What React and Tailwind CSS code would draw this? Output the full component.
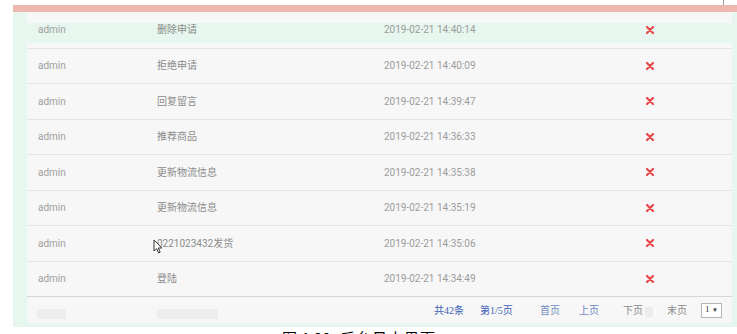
import React from 'react';

const rows = [
  { user: 'admin', action: '删除申请', time: '2019-02-21 14:40:14', active: true },
  { user: 'admin', action: '拒绝申请', time: '2019-02-21 14:40:09' },
  { user: 'admin', action: '回复留言', time: '2019-02-21 14:39:47' },
  { user: 'admin', action: '推荐商品', time: '2019-02-21 14:36:33' },
  { user: 'admin', action: '更新物流信息', time: '2019-02-21 14:35:38' },
  { user: 'admin', action: '更新物流信息', time: '2019-02-21 14:35:19' },
  { user: 'admin', action: '0221023432发货', time: '2019-02-21 14:35:06', cursor: true },
  { user: 'admin', action: '登陆', time: '2019-02-21 14:34:49' },
];

function DeleteIcon() {
  return (
    <svg width="8" height="8" viewBox="0 0 8 8" className="block">
      <path d="M1 1 L7 7 M7 1 L1 7" stroke="#e9474a" strokeWidth="2.2" strokeLinecap="round" />
    </svg>
  );
}

function Cursor() {
  return (
    <svg width="10" height="15" viewBox="0 0 10 15" className="absolute left-[-4px] top-[3px]">
      <path d="M1 1 L1 12 L3.6 9.6 L5.6 14 L7.2 13.2 L5.3 9 L8.8 9 Z" fill="#fff" stroke="#333" strokeWidth="1" strokeLinejoin="round" />
    </svg>
  );
}

function LogRow({ row, first }) {
  return (
    <div className={`relative h-[35.5px] flex items-center ${first ? '' : 'border-t border-[#e4e4e4]'}`}>
      {row.active && <div className="absolute left-0 right-0 top-[11px] h-[20px] bg-[#e7f6ee]" />}
      <span className="relative w-[119px] pl-[11px] text-[10px] text-[#a0a0a0] box-content">{row.user}</span>
      <span className="relative w-[227px] text-[10px] text-[#8c8c8c]">
        {row.action}
        {row.cursor && <Cursor />}
      </span>
      <span className="relative w-[231px] text-[10px] text-[#9c9c9c]">{row.time}</span>
      <span className="relative w-[70px] flex justify-center">
        <DeleteIcon />
      </span>
    </div>
  );
}

export default function App() {
  return (
    <div
      className="w-[737px] h-[334px] overflow-hidden bg-white"
      style={{ fontFamily: 'Roboto, "Noto Sans CJK SC", sans-serif' }}
    >
      <div className="pl-[13px]">
        {/* top strip */}
        <div className="relative h-[5px]">
          <div className="absolute left-[710px] top-0 h-[5px] w-[14px] border-l border-[#999]" />
        </div>
        <div className="h-[7px] bg-[#efb8ae]" />

        {/* green frame */}
        <div className="bg-[#e7f6ee] pl-[14px] pr-[5px] pb-[4px]">
          <div className="bg-[#f7f7f7]">
            {rows.map((row, i) => (
              <LogRow key={i} row={row} first={i === 0} />
            ))}

            {/* pagination */}
            <div
              className="relative h-[27px] border-t border-[#d6d6d6] flex items-center text-[10px]"
              style={{ fontFamily: '"Liberation Serif", "Noto Sans CJK SC", serif' }}
            >
              <div className="absolute left-[10px] top-[12px] h-[10px] w-[29px] bg-[#ededed]" />
              <div className="absolute left-[130px] top-[12px] h-[10px] w-[61px] bg-[#ededed]" />
              <div className="absolute left-[618px] top-[10px] h-[10px] w-[8px] bg-[#ececec]" />
              <div className="ml-[407px] flex items-center">
                <span className="w-[46px] text-[#3d62b3]">共42条</span>
                <span className="w-[60px] text-[#3d62b3]">第1/5页</span>
                <span className="w-[39px] text-[#6f89c0]">首页</span>
                <span className="w-[44px] text-[#6f89c0]">上页</span>
                <span className="w-[44px] text-[#8a8a8a]">下页</span>
                <span className="w-[34px] text-[#8a8a8a]">末页</span>
                <span className="w-[21px] h-[15px] border border-[#b5b5b5] bg-white flex items-center justify-between px-[3px] text-[9px] text-[#333]">
                  <span>1</span>
                  <span className="text-[6px]">▼</span>
                </span>
              </div>
            </div>
          </div>
        </div>
      </div>

      {/* caption */}
      <div
        className="mt-[1px] pl-[282px] flex text-[15px] leading-[20px] text-black"
        style={{ fontFamily: '"Noto Sans CJK SC", sans-serif' }}
      >
        <span className="w-[58px]">图 4-20</span>
        <span className="tracking-[1px]">后台日志界面</span>
      </div>
    </div>
  );
}
